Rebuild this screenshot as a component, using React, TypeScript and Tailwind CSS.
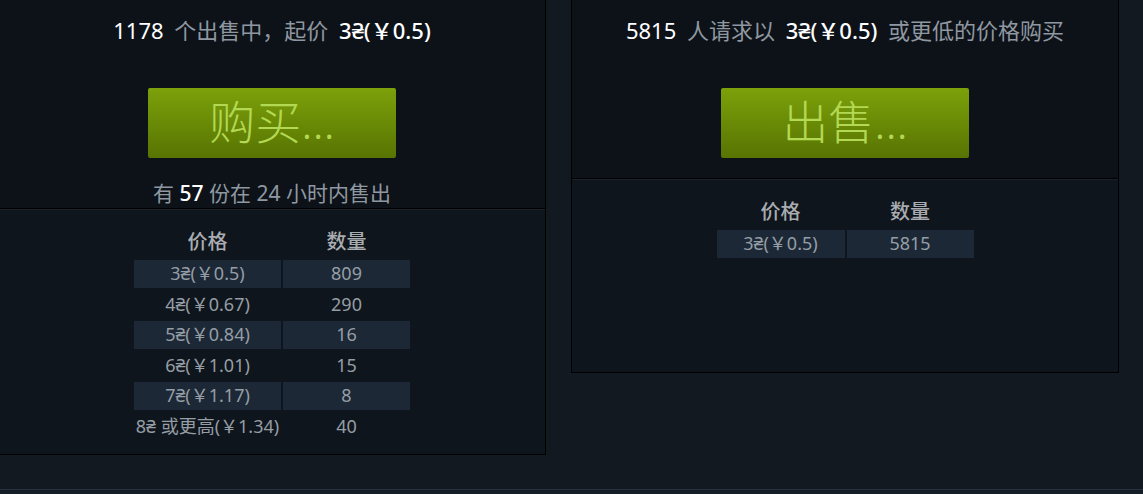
import React from "react";

const sellRows = [
  { price: "3₴(￥0.5)", qty: "809" },
  { price: "4₴(￥0.67)", qty: "290" },
  { price: "5₴(￥0.84)", qty: "16" },
  { price: "6₴(￥1.01)", qty: "15" },
  { price: "7₴(￥1.17)", qty: "8" },
  { price: "8₴ 或更高(￥1.34)", qty: "40" },
];

const buyRows = [{ price: "3₴(￥0.5)", qty: "5815" }];

function OrderTable({ rows, wide }: { rows: { price: string; qty: string }[]; wide: boolean }) {
  return (
    <div className="flex justify-center">
      <div className={`grid gap-x-[2px] gap-y-[2.5px] ${wide ? "grid-cols-[147px_127px]" : "grid-cols-[128px_127px]"}`}>
        <div className="h-[31px] flex items-center justify-center text-[20px] text-[#a9acb0] font-medium">价格</div>
        <div className="h-[31px] flex items-center justify-center text-[20px] text-[#a9acb0] font-medium">数量</div>
        {rows.map((r, i) => (
          <React.Fragment key={i}>
            <div className={`h-[28px] flex items-center justify-center text-[18px] text-[#959da5] whitespace-pre ${i % 2 === 0 ? "bg-[#1c2836]" : ""}`}>{r.price}</div>
            <div className={`h-[28px] flex items-center justify-center text-[18px] text-[#959da5] ${i % 2 === 0 ? "bg-[#1c2836]" : ""}`}>{r.qty}</div>
          </React.Fragment>
        ))}
      </div>
    </div>
  );
}

function GreenButton({ label }: { label: string }) {
  return (
    <div className="flex justify-center">
      <button className="w-[248px] h-[70px] rounded-[2px] bg-gradient-to-b from-[#7ca10a] to-[#587403] text-[#b3d853] text-[46px] font-light leading-none flex items-center justify-center pb-[4px]">
        {label}
      </button>
    </div>
  );
}

export default function App() {
  return (
    <div
      className="h-[494px] w-[1143px] overflow-hidden bg-[#121921] flex flex-col"
      style={{ fontFamily: '"Noto Sans", "Noto Sans CJK SC", sans-serif' }}
    >
      <div className="flex items-start gap-[25px] -ml-[2px]">
        {/* sell side */}
        <div className="w-[548px] border-x border-b border-black bg-[#0d1219]">
          <div className="pt-[18px] pb-[2px] border-b border-black">
            <div className="h-[24px] flex items-center justify-center text-[22px] text-[#8f98a0] whitespace-pre [word-spacing:5px]">
              <span className="text-white">1178</span> 个出售中，起价 <span className="text-white font-medium">3₴(￥0.5)</span>
            </div>
            <div className="mt-[46px]">
              <GreenButton label="购买..." />
            </div>
            <div className="mt-[24px] h-[24px] flex items-center justify-center text-[21px] text-[#8f98a0] whitespace-pre">
              有 <span className="text-white font-medium">57</span> 份在 24 小时内售出
            </div>
          </div>
          <div className="border-t border-[#1a222c] bg-[#0f151c] pt-[16px] pb-[14px]">
            <OrderTable rows={sellRows} wide />
          </div>
        </div>

        {/* buy side */}
        <div className="w-[548px] border-x border-b border-black bg-[#0d1219]">
          <div className="pt-[18px] pb-[20px] border-b border-black">
            <div className="h-[24px] flex items-center justify-center text-[22px] text-[#8f98a0] whitespace-pre [word-spacing:5px]">
              <span className="text-white">5815</span> 人请求以 <span className="text-white font-medium">3₴(￥0.5)</span> 或更低的价格购买
            </div>
            <div className="mt-[46px]">
              <GreenButton label="出售..." />
            </div>
          </div>
          <div className="h-[193px] border-t border-[#1a222c] bg-[#0f151c] pt-[16px]">
            <OrderTable rows={buyRows} wide={false} />
          </div>
        </div>
      </div>

      <div className="mt-auto h-[5px] border-t border-[#243040] bg-[#151d27]" />
    </div>
  );
}
